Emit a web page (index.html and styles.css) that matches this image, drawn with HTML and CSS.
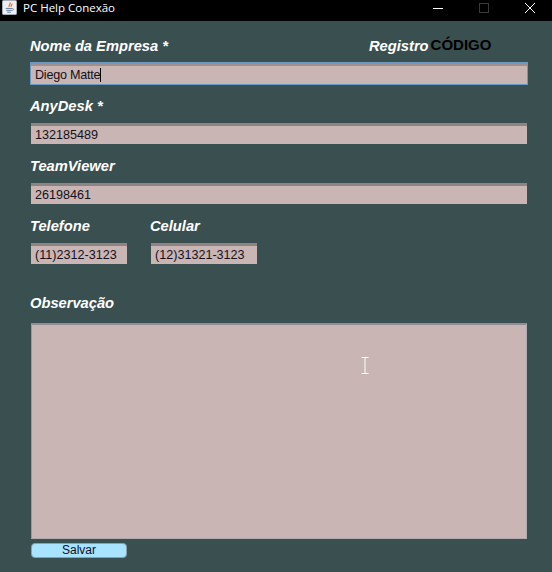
FILE: index.html
```html
<!DOCTYPE html>
<html lang="pt-BR">

<head>
  <meta charset="UTF-8">
  <title>PC Help Conexão</title>
  <link rel="stylesheet" href="styles.css">
</head>

<body>
  <div class="window">
    <div class="titlebar">
      <svg class="app-icon" width="15" height="15" viewBox="0 0 16 16">
        <rect x="0.5" y="0.5" width="15" height="15" rx="1" fill="#eef0f4" stroke="#aab0bc" />
        <path d="M8.5 2.5c1.5 1.5-2 3 -.8 4.8M10.5 4c.8 1-1.5 2-.6 3.2" fill="none" stroke="#e8681c" stroke-width="1.3" />
        <path d="M4 9h7M4.5 11h6M5.5 13h4" stroke="#5a7a9c" stroke-width="1" />
        <path d="M11 9.2c2 -.4 2 1.8 -.4 1.8" fill="none" stroke="#5a7a9c" stroke-width=".8" />
      </svg>
      <span class="app-title">PC Help Conexão</span>
      <div class="win-buttons">
        <svg class="win-btn" width="46" height="14" viewBox="0 0 46 14">
          <path d="M18 7.5h10" stroke="#fff" stroke-width="1" />
        </svg>
        <svg class="win-btn" width="46" height="14" viewBox="0 0 46 14">
          <rect x="18.5" y="2.5" width="9" height="9" fill="none" stroke="#3a3a3a" />
        </svg>
        <svg class="win-btn" width="46" height="14" viewBox="0 0 46 14">
          <path d="M18 2l10 10M28 2l-10 10" stroke="#fff" stroke-width="1" />
        </svg>
      </div>
    </div>

    <form class="form">
      <div class="row-top">
        <label class="label label-empresa">Nome da Empresa *</label>
        <label class="label">Registro</label>
        <span class="codigo">CÓDIGO</span>
      </div>
      <div class="field field-focus"><span class="caret">Diego Matte</span></div>

      <label class="label label-block">AnyDesk *</label>
      <div class="field">132185489</div>

      <label class="label label-block">TeamViewer</label>
      <div class="field">26198461</div>

      <div class="phones">
        <div class="phone-col">
          <label class="label label-block">Telefone</label>
          <div class="field field-tel">(11)2312-3123</div>
        </div>
        <div class="phone-col">
          <label class="label label-block">Celular</label>
          <div class="field field-cel">(12)31321-3123</div>
        </div>
      </div>

      <label class="label label-block label-obs">Observação</label>
      <div class="field textarea"></div>

      <button type="button" class="btn-salvar">Salvar</button>
    </form>

    <svg class="ibeam" width="8" height="17" viewBox="0 0 8 17">
      <path d="M0.5 0.5h7M0.5 16.5h7M4 0.5v16" fill="none" stroke="#fff" stroke-width="1" />
    </svg>
  </div>
</body>

</html>
```

FILE: styles.css
```css
* {
  box-sizing: border-box;
}

html,
body {
  margin: 0;
  height: 100%;
}

body {
  background: #3a5050;
  font-family: "Liberation Sans", Arial, sans-serif;
  overflow: hidden;
}

.window {
  position: relative;
  width: 552px;
  height: 572px;
  background: #3a5050;
}

.titlebar {
  height: 21px;
  background: #000;
  display: flex;
  align-items: center;
  padding: 0 0 6px 2px;
}

.app-icon {
  flex: none;
}

.app-title {
  margin-left: 6px;
  color: #fff;
  font-family: "Open Sans", sans-serif;
  font-size: 11.5px;
}

.win-buttons {
  margin-left: auto;
  display: flex;
  margin-right: -1px;
}

.win-btn {
  display: block;
}

.form {
  padding: 15px 25px 0 31px;
}

.row-top {
  display: flex;
  align-items: center;
  height: 20px;
}

.label {
  color: #fff;
  font-size: 14.7px;
  font-weight: 700;
  font-style: italic;
  line-height: 20px;
  margin-left: -1px;
}

.label-empresa {
  width: 340px;
}

.label-block {
  display: block;
  margin-top: 12px;
  margin-bottom: 7px;
}

.codigo {
  color: #000;
  font-size: 15px;
  font-weight: 700;
  margin-left: 2px;
  position: relative;
  top: -2px;
}

.field {
  height: 21px;
  background: #c9b5b3;
  border-top: 3px solid #8e8484;
  padding-left: 4px;
  color: #14101c;
  font-size: 12.6px;
  line-height: 19px;
  overflow: hidden;
}

.field-focus {
  height: 23px;
  margin: 6px -1px -1px;
  padding-left: 4px;
  border: 1px solid #6a9ac4;
  border-top: 2px solid #6a9ac4;
  box-shadow: inset 0 2px 0 #a08f8f;
  line-height: 19px;
}

.caret {
  display: inline-block;
  height: 14px;
  line-height: 14px;
  letter-spacing: -0.25px;
  border-right: 1px solid #000;
  overflow: hidden;
  vertical-align: top;
  margin-top: 4px;
}

.phones {
  display: flex;
  gap: 24px;
}

.phone-col {
  display: flex;
  flex-direction: column;
}

.field-tel {
  width: 96px;
}

.field-cel {
  width: 106px;
}

.label-obs {
  margin-top: 29px;
  margin-bottom: 10px;
}

.textarea {
  height: 216px;
  border-top: 2px solid #8e8e94;
  border-left: 1px solid #9a9a9e;
  border-right: 1px solid #aeaab0;
  border-bottom: 1px solid #aeaab0;
}

.btn-salvar {
  display: block;
  width: 96px;
  height: 15px;
  margin-top: 4px;
  padding: 0;
  background: #a8e4ff;
  border: 1px solid #8aa0ac;
  border-radius: 4px;
  color: #10101c;
  font-family: "Liberation Sans", Arial, sans-serif;
  font-size: 12px;
  line-height: 13px;
}

.ibeam {
  position: absolute;
  left: 361px;
  top: 357px;
}
```
